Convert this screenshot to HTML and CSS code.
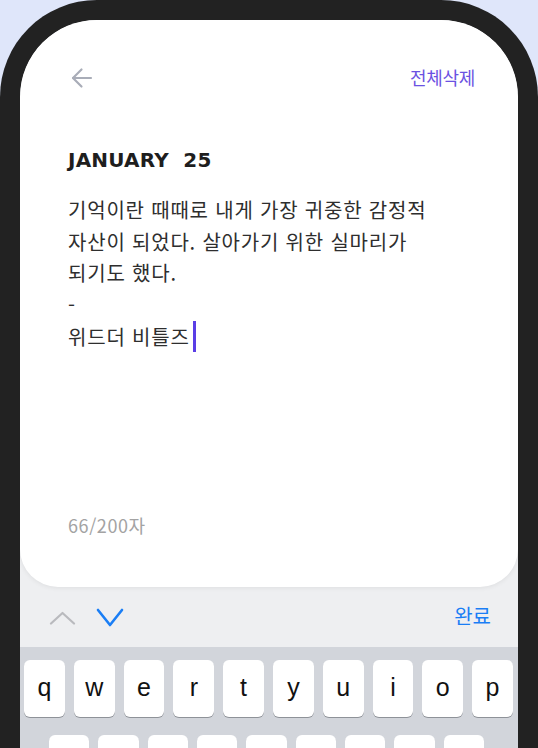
FILE: index.html
```html
<!DOCTYPE html>
<html lang="ko">
<head>
<meta charset="utf-8">
<title>Diary</title>
<link rel="stylesheet" href="styles.css">
</head>
<body>
<div class="phone">
  <div class="screen">
    <div class="card">
      <div class="header">
        <svg class="back" width="22" height="22" viewBox="0 0 22 22" fill="none" stroke="#a9adb8" stroke-width="2.2" stroke-linecap="round" stroke-linejoin="round">
          <path d="M20 11H2"/>
          <path d="M10.5 2.5L2 11l8.5 8.5"/>
        </svg>
        <span class="clear">전체삭제</span>
      </div>
      <h1 class="date">JANUARY&nbsp; 25</h1>
      <div class="body">
        <p class="line">기억이란 때때로 내게 가장 귀중한 감정적</p>
        <p class="line">자산이 되었다. 살아가기 위한 실마리가</p>
        <p class="line">되기도 했다.</p>
        <p class="line">-</p>
        <p class="line">위드더 비틀즈<span class="caret"></span></p>
      </div>
      <div class="count">66/200자</div>
    </div>
    <div class="toolbar">
      <svg class="chev-up" width="27" height="14" viewBox="0 0 27 14" fill="none" stroke="#b9babe" stroke-width="2.2" stroke-linecap="round" stroke-linejoin="round">
        <path d="M2 12.5L13.5 2 25 12.5"/>
      </svg>
      <svg class="chev-down" width="28" height="19" viewBox="0 0 28 19" fill="none" stroke="#1a7ef5" stroke-width="2.6" stroke-linecap="round" stroke-linejoin="round">
        <path d="M2 2l12 15L26 2"/>
      </svg>
      <span class="done">완료</span>
    </div>
    <div class="keyboard">
      <div class="row">
        <div class="key">q</div><div class="key">w</div><div class="key">e</div><div class="key">r</div><div class="key">t</div><div class="key">y</div><div class="key">u</div><div class="key">i</div><div class="key">o</div><div class="key">p</div>
      </div>
      <div class="row row2">
        <div class="key"></div><div class="key"></div><div class="key"></div><div class="key"></div><div class="key"></div><div class="key"></div><div class="key"></div><div class="key"></div><div class="key"></div>
      </div>
    </div>
  </div>
</div>
</body>
</html>
```

FILE: styles.css
```css
* { box-sizing: border-box; }

html, body {
  margin: 0;
  padding: 0;
}

body {
  width: 538px;
  height: 748px;
  overflow: hidden;
  background: #dfe6fa;
  font-family: "Noto Sans CJK KR", "Noto Sans", sans-serif;
}

.phone {
  width: 538px;
  height: 860px;
  background: #222222;
  border-radius: 97px 97px 0 0;
  padding: 20px 20px 0;
}

.screen {
  width: 498px;
  height: 840px;
  background: #eeeff1;
  border-radius: 77px 77px 0 0;
  overflow: hidden;
  display: flex;
  flex-direction: column;
}

.card {
  height: 567px;
  flex: none;
  background: #ffffff;
  border-radius: 77px 77px 38px 38px;
  box-shadow: 0 1px 5px rgba(0, 0, 0, 0.07);
  padding: 40px 43px 50px 48px;
  display: flex;
  flex-direction: column;
  position: relative;
  z-index: 1;
}

.header {
  height: 36px;
  display: flex;
  align-items: center;
  justify-content: space-between;
}

.back {
  margin-left: 3px;
  display: block;
}

.clear {
  font-size: 18px;
  letter-spacing: -0.3px;
  color: #6b51e2;
  line-height: 24px;
  margin-top: -2px;
}

.date {
  margin: 52px 0 0;
  font-family: "DejaVu Sans", sans-serif;
  font-weight: 700;
  font-size: 20px;
  line-height: 24px;
  color: #1e1e1e;
  letter-spacing: 0.2px;
}

.body {
  margin-top: 22px;
  color: #2e2e2e;
  font-size: 20px;
  line-height: 31.7px;
  letter-spacing: 0.8px;
}

.line {
  margin: 0;
  height: 31.7px;
  white-space: nowrap;
}

.caret {
  display: inline-block;
  width: 3px;
  height: 31.7px;
  background: #5a3ee6;
  margin-left: 3px;
  vertical-align: top;
}

.count {
  margin-top: auto;
  font-size: 18px;
  letter-spacing: 0.6px;
  line-height: 24px;
  color: #a3a3a3;
}

.toolbar {
  height: 60px;
  flex: none;
  display: flex;
  align-items: center;
  padding: 1px 27px 0 29px;
}

.chev-up {
  display: block;
  margin-top: 1px;
}

.chev-down {
  display: block;
  margin-left: 20px;
}

.done {
  margin-left: auto;
  font-size: 20px;
  line-height: 24px;
  color: #1a7ef5;
  margin-top: -3px;
}

.keyboard {
  flex: 1;
  background: #d2d5db;
  padding: 13px 5px 0 4px;
  display: flex;
  flex-direction: column;
  gap: 18px;
}

.row {
  display: flex;
  gap: 9px;
}

.row2 {
  padding: 0 29px 0 25px;
}

.key {
  flex: 1;
  height: 57px;
  background: #ffffff;
  border-radius: 6px;
  box-shadow: 0 1px 0 #8e9298;
  display: flex;
  align-items: center;
  justify-content: center;
  font-family: "Liberation Sans", Arial, sans-serif;
  font-size: 25px;
  color: #111111;
  padding-bottom: 3px;
}
```
